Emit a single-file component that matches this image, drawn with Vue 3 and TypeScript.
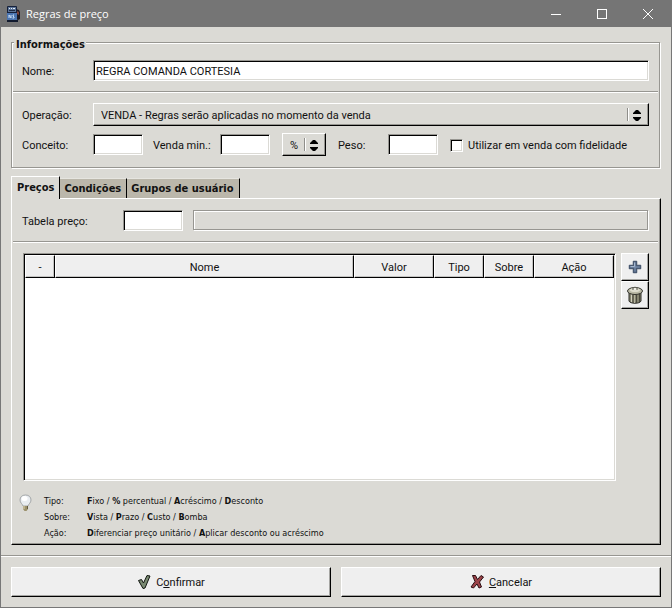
<script setup lang="ts">
import { ref } from 'vue'

interface Column {
  label: string
  size: string
}

interface Hint {
  term: string
  options: [string, string][]
}

const nome = ref('REGRA COMANDA CORTESIA')
const operacao = ref('venda')
const conceito = ref('')
const vendaMin = ref('')
const unidade = ref('%')
const peso = ref('')
const fidelidade = ref(false)
const tabela = ref('')

const tabs = ['Preços', 'Condições', 'Grupos de usuário']
const activeTab = ref(0)

const columns: Column[] = [
  { label: '-', size: 'col-mark' },
  { label: 'Nome', size: 'col-name' },
  { label: 'Valor', size: 'col-wide' },
  { label: 'Tipo', size: 'col-short' },
  { label: 'Sobre', size: 'col-short' },
  { label: 'Ação', size: 'col-wide' },
]

const hints: Hint[] = [
  { term: 'Tipo:', options: [['F', 'ixo'], ['%', ' percentual'], ['A', 'créscimo'], ['D', 'esconto']] },
  { term: 'Sobre:', options: [['V', 'ista'], ['P', 'razo'], ['C', 'usto'], ['B', 'omba']] },
  { term: 'Ação:', options: [['D', 'iferenciar preço unitário'], ['A', 'plicar desconto ou acréscimo']] },
]
</script>

<template>
  <div class="window">
    <header class="titlebar">
      <svg class="app-icon" width="15" height="16" viewBox="0 0 15 16" aria-hidden="true">
        <path d="M10 3l3 1 1 2v7l-2 1-2-1z" fill="#1c1a22" />
        <path d="M11 5l2 1v3l-2-1z" fill="#7d4038" />
        <rect x="1" y="0" width="10" height="16" rx="1" fill="#15203a" />
        <rect x="2" y="1" width="8" height="5" fill="#5b7396" />
        <path d="M3 2h1v1H3zM5 2h1v1H5zM7 2h2v1H7z" fill="#e4ecf5" />
        <rect x="3" y="4" width="6" height="1" fill="#1d2a44" />
        <rect x="1" y="7" width="10" height="7" fill="#4a74b0" />
        <path d="M3 12V9l2 3V9M8 9H7v1l1 1v1H6.500" fill="none" stroke="#c6dcf5" />
        <rect x="1" y="14" width="11" height="2" fill="#111a2e" />
      </svg>
      <h1 class="title">Regras de preço</h1>
      <div class="window-buttons">
        <button type="button" aria-label="Minimizar">
          <svg width="12" height="12" viewBox="0 0 12 12"><path d="M1 6.500h10" /></svg>
        </button>
        <button type="button" aria-label="Maximizar">
          <svg width="12" height="12" viewBox="0 0 12 12"><rect x="1.500" y="1.500" width="9" height="9" /></svg>
        </button>
        <button type="button" aria-label="Fechar">
          <svg width="12" height="12" viewBox="0 0 12 12"><path d="M1 1l10 10M11 1L1 11" /></svg>
        </button>
      </div>
    </header>

    <main class="content">
      <section class="group" aria-labelledby="info-title">
        <h2 id="info-title" class="group-title">Informações</h2>
        <div class="row">
          <label class="lead" for="nome">Nome:</label>
          <input id="nome" v-model="nome" class="field grow" type="text" />
        </div>
        <hr class="etched" />
        <div class="row">
          <label class="lead" for="operacao">Operação:</label>
          <div class="combo grow">
            <select id="operacao" v-model="operacao">
              <option value="venda">VENDA - Regras serão aplicadas no momento da venda</option>
            </select>
            <svg class="combo-arrows" width="18" height="16" viewBox="0 0 18 16" aria-hidden="true">
              <path d="M.5 1v13" stroke="#8f8e8a" />
              <path d="M1.500 1v13" stroke="#fff" />
              <path d="M6 7V6l3-3h2l3 3v1zM6 10h8v1l-3 3H9l-3-3z" />
            </svg>
          </div>
        </div>
        <div class="row params">
          <label class="lead" for="conceito">Conceito:</label>
          <input id="conceito" v-model="conceito" class="field small" type="text" />
          <label class="lead-venda" for="venda-min">Venda min.:</label>
          <input id="venda-min" v-model="vendaMin" class="field small" type="text" />
          <div class="combo unit">
            <select v-model="unidade" aria-label="Unidade">
              <option value="%">%</option>
            </select>
            <svg class="combo-arrows" width="18" height="16" viewBox="0 0 18 16" aria-hidden="true">
              <path d="M.5 1v13" stroke="#8f8e8a" />
              <path d="M1.500 1v13" stroke="#fff" />
              <path d="M6 7V6l3-3h2l3 3v1zM6 10h8v1l-3 3H9l-3-3z" />
            </svg>
          </div>
          <label class="lead-peso" for="peso">Peso:</label>
          <input id="peso" v-model="peso" class="field small" type="text" />
          <label class="check">
            <input v-model="fidelidade" type="checkbox" />
            Utilizar em venda com fidelidade
          </label>
        </div>
      </section>

      <div class="tabs" role="tablist">
        <button
          v-for="(tab, index) in tabs"
          :key="tab"
          type="button"
          role="tab"
          class="tab"
          :class="{ active: index === activeTab }"
          :aria-selected="index === activeTab"
          @click="activeTab = index"
        >
          {{ tab }}
        </button>
      </div>

      <section class="panel" role="tabpanel">
        <div class="row">
          <label class="lead-table" for="tabela">Tabela preço:</label>
          <input id="tabela" v-model="tabela" class="field code" type="text" />
          <input class="readout grow" type="text" readonly aria-label="Descrição da tabela" />
        </div>
        <hr class="etched" />
        <div class="list-area">
          <div class="list">
            <table>
              <colgroup>
                <col v-for="column in columns" :key="column.label" :class="column.size" />
              </colgroup>
              <thead>
                <tr>
                  <th v-for="column in columns" :key="column.label" scope="col">{{ column.label }}</th>
                </tr>
              </thead>
            </table>
          </div>
          <div class="tools">
            <button type="button" class="tool" aria-label="Adicionar">
              <svg width="16" height="16" viewBox="0 0 16 16">
                <path d="M6.500 2.500h3v4h4v3h-4v4h-3v-4h-4v-3h4z" fill="#7288a8" stroke="#4a5a72" stroke-width="1.500" stroke-linejoin="round" />
                <path d="M7.500 3.500v4h-4" fill="none" stroke="#a5b7cf" />
              </svg>
            </button>
            <button type="button" class="tool" aria-label="Remover">
              <svg width="18" height="20" viewBox="0 0 18 20">
                <path d="M3 7v9c1 3 11 3 12 0V7z" fill="#85846f" stroke="#2c2c26" />
                <path d="M5.500 9v8" stroke="#d2d1bf" />
                <path d="M8.500 10v8" stroke="#b4b39d" />
                <path d="M7 10v8M10.500 10v8M13.500 9v8" stroke="#4a493d" />
                <ellipse cx="9" cy="6" rx="7.500" ry="3.500" fill="#b9b8a4" stroke="#33332c" />
                <ellipse cx="9" cy="5" rx="5" ry="2" fill="#dddccd" />
                <path d="M7 5V3c1-1 3-1 4 0v2" fill="#eeeee6" stroke="#55554b" />
              </svg>
            </button>
          </div>
        </div>
        <div class="help">
          <svg class="bulb" width="13" height="18" viewBox="0 0 13 18" aria-hidden="true">
            <path d="M6.500 1C3 1 1 3.200 1 6c0 2.800 2.500 4 3 6h5c.5-2 3-3.200 3-6 0-2.800-2-5-5.500-5z" fill="#e9edf1" stroke="#a3a6a8" />
            <ellipse cx="5.500" cy="4.500" rx="3" ry="2.500" fill="#fff" />
            <path d="M4 12h5v3l-1.500 2h-2L4 15z" fill="#9b916c" />
            <path d="M5 12v3" stroke="#ddd5b4" />
            <path d="M8.500 12v3" stroke="#625b42" />
          </svg>
          <dl class="hints">
            <template v-for="hint in hints" :key="hint.term">
              <dt>{{ hint.term }}</dt>
              <dd>
                <template v-for="(option, index) in hint.options" :key="index">
                  <template v-if="index"> / </template><b>{{ option[0] }}</b>{{ option[1] }}
                </template>
              </dd>
            </template>
          </dl>
        </div>
      </section>
    </main>

    <hr class="etched" />
    <footer class="actions">
      <button type="button" class="action">
        <svg width="14" height="16" viewBox="0 0 14 16" aria-hidden="true">
          <path d="M1.500 6.500l3-1 2 3.500 3.500-7.500 3 .5-5 12-2 .5z" fill="#7a8a72" stroke="#10160f" stroke-linejoin="round" />
        </svg>
        <span>C<u>o</u>nfirmar</span>
      </button>
      <button type="button" class="action">
        <svg width="14" height="16" viewBox="0 0 14 16" aria-hidden="true">
          <path d="M2.500 1.500h3l2 4 3.500-4 2.500 1.500-4 5 2 5-2.500 1-2-4-3.500 4-2.500-1 4-5.500z" fill="#9c4349" stroke="#290d10" stroke-linejoin="round" />
        </svg>
        <span><u>C</u>ancelar</span>
      </button>
    </footer>
  </div>
</template>

<style>
body {
  margin: 0;
}
</style>

<style scoped>
.window {
  --face: #dbdad5;
  --shade: #979691;
  --bold-face: 'DejaVu Sans Condensed', 'Noto Sans', sans-serif;
  box-sizing: border-box;
  display: flex;
  flex-direction: column;
  min-height: 100vh;
  border: 1px solid #777;
  border-top: 0;
  background: var(--face);
  color: #111;
  font: 11px/16px Roboto, 'Noto Sans', sans-serif;
}

.window *,
.window *::before {
  box-sizing: border-box;
}

button,
input,
select {
  margin: 0;
  padding: 0;
  border: 0;
  border-radius: 0;
  outline: 0;
  color: inherit;
  font: inherit;
}

label,
.action span {
  padding-top: 2px;
}

.titlebar {
  display: flex;
  align-items: center;
  height: 27px;
  padding-left: 5px;
  background: #757575;
  color: #fff;
}

.title {
  flex: 1;
  margin: 0 0 0 5px;
  font: 11px/16px 'Open Sans', 'Noto Sans', sans-serif;
}

.window-buttons {
  display: flex;
}

.window-buttons button {
  display: grid;
  place-items: center;
  width: 46px;
  height: 26px;
  background: none;
}

.window-buttons svg {
  fill: none;
  stroke: #fff;
}

.content {
  display: flex;
  flex: 1;
  flex-direction: column;
  padding: 15px 10px 10px;
}

.group {
  margin-right: 1px;
  padding: 0 10px 11px;
  border: 1px solid var(--shade);
  box-shadow: inset 1px 1px 0 #fff, 1px 1px 0 #fff;
}

.group-title {
  position: relative;
  width: fit-content;
  height: 18px;
  margin: -8px 0 7px -8px;
  padding: 0 1px 0 2px;
  background: var(--face);
  font: bold 11px/20px var(--bold-face);
}

.row {
  display: flex;
  align-items: center;
}

.grow {
  flex: 1;
  min-width: 0;
}

.lead {
  width: 71px;
}

.lead-venda {
  width: 67px;
}

.lead-peso {
  width: 50px;
}

.lead-table {
  width: 101px;
}

.params {
  margin-top: 7px;
}

.params .lead-venda {
  margin-left: 10px;
}

.params .lead-peso,
.params .unit,
.params .check {
  margin-left: 12px;
}

.field {
  height: 21px;
  padding: 2px 2px 0;
  border: 1px solid;
  border-color: var(--shade) #fff #fff var(--shade);
  background: #fff;
  box-shadow: inset 1px 1px 0 #000, inset -1px -1px 0 var(--face);
}

.small {
  width: 50px;
}

.code {
  width: 60px;
}

.readout {
  align-self: flex-start;
  height: 20px;
  margin: 0 1px 0 10px;
  padding: 0 3px;
  border: 1px solid var(--shade);
  background: var(--face);
  box-shadow: inset 1px 1px 0 #fff, 1px 1px 0 #fff;
}

.combo {
  position: relative;
  height: 23px;
  border: 1px solid;
  border-color: #fff #000 #000 #fff;
  box-shadow: inset -1px -1px 0 var(--shade);
}

.combo select {
  width: 100%;
  height: 100%;
  padding: 2px 22px 0 7px;
  background: none;
  appearance: none;
}

.combo-arrows {
  position: absolute;
  top: 3px;
  right: 3px;
  pointer-events: none;
}

.unit {
  width: 44px;
}

.check {
  display: flex;
  align-items: center;
  gap: 5px;
}

.check input {
  width: 13px;
  height: 13px;
  border: 1px solid;
  border-color: var(--shade) #fff #fff var(--shade);
  background: #fff;
  box-shadow: inset 1px 1px 0 #000, inset -1px -1px 0 var(--face);
  appearance: none;
}

.check input:checked {
  background: radial-gradient(#000 3px, #fff 4px);
}

.etched {
  height: 2px;
  margin: 10px -9px;
  border: 0;
  border-top: 1px solid var(--shade);
  border-bottom: 1px solid #fff;
}

.window > .etched {
  margin: 0;
}

.tabs {
  display: flex;
  align-items: flex-end;
  margin-top: 8px;
}

.tab {
  height: 20px;
  padding: 0 5px 0 4px;
  border-top: 1px solid #e6e5e0;
  border-right: 1px solid #000;
  background: #bbb7ab;
  font: bold 11px/20px var(--bold-face);
}

.tab.active {
  position: relative;
  height: 23px;
  margin-bottom: -1px;
  padding: 0 5px;
  border-top-color: #fff;
  border-left: 1px solid #fff;
  background: var(--face);
}

.panel {
  display: flex;
  flex: 1;
  flex-direction: column;
  padding: 11px 11px 3px 10px;
  border: 1px solid;
  border-color: #fff #000 #000 #fff;
  box-shadow: inset -1px -1px 0 var(--shade);
}

.list-area {
  display: flex;
  flex: 1;
  gap: 5px;
}

.list {
  flex: 1;
  min-height: 120px;
  margin-left: 1px;
  padding: 1px;
  border: 1px solid;
  border-color: var(--shade) #fff #fff var(--shade);
  background: #fff;
  box-shadow: inset 1px 1px 0 #000, inset -1px -1px 0 var(--face);
}

table {
  width: 100%;
  border-collapse: separate;
  border-spacing: 0;
  table-layout: fixed;
}

.col-mark {
  width: 30px;
}

.col-short {
  width: 50px;
}

.col-wide {
  width: 80px;
}

th {
  height: 23px;
  padding: 2px 0 0;
  border: 1px solid;
  border-color: #fff #000 #000 #fff;
  background: #efefef;
  box-shadow: inset -1px -1px 0 #c4c4c2;
  font-weight: normal;
}

.tools {
  display: flex;
  flex-direction: column;
}

.tool,
.action {
  border: 1px solid;
  border-color: #fff #000 #000 #fff;
  background: #efefef;
  box-shadow: inset -1px -1px 0 #a5a5a2;
}

.tool {
  display: grid;
  place-items: center;
  width: 28px;
  height: 28px;
}

.help {
  display: flex;
  gap: 12px;
  margin: 12px 0 0 -3px;
}

.bulb {
  margin-top: 1px;
}

.hints {
  display: grid;
  grid-template-columns: 43px auto;
  margin: 0;
  font: 9px/16px var(--bold-face);
}

.hints dd {
  margin: 0;
}

.actions {
  display: flex;
  gap: 10px;
  padding: 10px;
}

.action {
  display: flex;
  flex: 1;
  align-items: center;
  justify-content: center;
  gap: 5px;
  height: 30px;
}
</style>
